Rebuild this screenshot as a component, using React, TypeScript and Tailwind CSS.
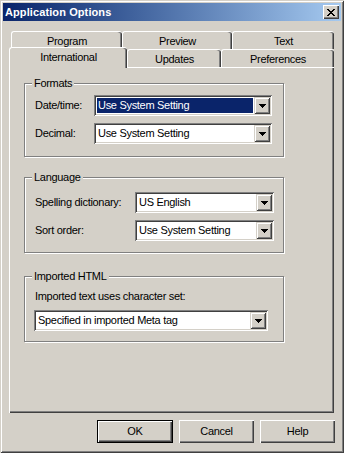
import React from 'react';

const raised =
  'shadow-[inset_1px_1px_#d4d0c8,inset_-1px_-1px_#404040,inset_2px_2px_#ffffff,inset_-2px_-2px_#808080]';
const button =
  'shadow-[inset_1px_1px_#ffffff,inset_-1px_-1px_#404040,inset_-2px_-2px_#808080]';
const sunken =
  'shadow-[inset_1px_1px_#808080,inset_-1px_-1px_#ffffff,inset_2px_2px_#404040,inset_-2px_-2px_#d4d0c8]';

function CloseGlyph() {
  const rows = ['##....##', '.##..##.', '..####..', '...##...', '..####..', '.##..##.', '##....##'];
  return (
    <svg width="8" height="7" viewBox="0 0 8 7" shapeRendering="crispEdges">
      {rows.map((r, y) =>
        r.split('').map((c, x) => (c === '#' ? <rect key={`${x}-${y}`} x={x} y={y} width="1" height="1" fill="#000" /> : null)),
      )}
    </svg>
  );
}

function Arrow() {
  return (
    <svg width="7" height="4" viewBox="0 0 7 4" shapeRendering="crispEdges">
      <path d="M0 0h7v1H0zM1 1h5v1H1zM2 2h3v1H2zM3 3h1v1H3z" fill="#000" />
    </svg>
  );
}

function Combo({ value, className, selected }: { value: string; className: string; selected?: boolean }) {
  return (
    <div className={`flex h-[21px] p-[2px] bg-white ${sunken} ${className}`}>
      <div className="flex-1 flex items-center pl-[1px] pr-[1px] py-[1px]">
        <div className={`flex-1 h-full flex items-center pl-[1px] ${selected ? 'bg-[#0a246a] text-white' : 'text-black'}`}>
          {value}
        </div>
      </div>
      <div className={`w-[16px] h-[17px] bg-[#d4d0c8] flex items-center justify-center ${raised}`}>
        <Arrow />
      </div>
    </div>
  );
}

function Group({ title, className, children }: { title: string; className: string; children: React.ReactNode }) {
  return (
    <div className={`relative w-[260px] border border-[#808080] shadow-[inset_1px_1px_#ffffff,1px_1px_#ffffff] ${className}`}>
      <span className="absolute -top-[7px] left-[7px] px-[2px] bg-[#d4d0c8] leading-[13px]">{title}</span>
      {children}
    </div>
  );
}

function Tab({ label, className }: { label: string; className: string }) {
  return (
    <div
      className={`flex items-center justify-center pt-[1px] border-l border-t border-white rounded-tl-[3px] rounded-tr-[3px] shadow-[inset_-1px_0_#404040,inset_-2px_0_#808080] ${className}`}
    >
      {label}
    </div>
  );
}

export default function App() {
  return (
    <div
      className={`w-[344px] h-[453px] bg-[#d4d0c8] p-[3px] flex flex-col text-[11px] tracking-[-0.3px] text-black font-['Liberation_Sans',Arial,sans-serif] ${raised}`}
    >
      {/* title bar */}
      <div className="h-[18px] flex items-center pl-[2px] pr-[2px] bg-linear-to-r from-[#0a246a] to-[#a6caf0]">
        <span className="flex-1 text-white font-bold text-[11px] tracking-[0.1px]">Application Options</span>
        <div className={`w-[16px] h-[14px] bg-[#d4d0c8] flex items-center justify-center ${button}`}>
          <CloseGlyph />
        </div>
      </div>

      {/* tabs */}
      <div className="mt-[10px] ml-[8px] flex h-[18px]">
        <Tab label="Program" className="w-[111px]" />
        <Tab label="Preview" className="w-[110px]" />
        <Tab label="Text" className="w-[102px]" />
      </div>
      <div className="ml-[8px] flex h-[18px]">
        <Tab label="International" className="relative z-10 -ml-[2px] -mt-[2px] w-[118px] h-[21px] bg-[#d4d0c8] pb-[2px]" />
        <Tab label="Updates" className="w-[94px]" />
        <Tab label="Preferences" className="w-[113px]" />
      </div>

      {/* panel */}
      <div
        className={`ml-[6px] w-[325px] h-[346px] pt-[16px] pl-[15px] flex flex-col shadow-[inset_1px_1px_#ffffff,inset_-1px_-1px_#404040,inset_-2px_-2px_#808080]`}
      >
        <Group title="Formats" className="h-[74px] pt-[11px] pl-[10px] flex flex-col gap-[7px]">
          <div className="flex items-center">
            <span className="w-[59px]">Date/time:</span>
            <Combo value="Use System Setting" className="w-[178px]" selected />
          </div>
          <div className="flex items-center">
            <span className="w-[59px]">Decimal:</span>
            <Combo value="Use System Setting" className="w-[178px]" />
          </div>
        </Group>

        <Group title="Language" className="mt-[20px] h-[76px] pt-[14px] pl-[10px] flex flex-col gap-[7px]">
          <div className="flex items-center">
            <span className="w-[100px]">Spelling dictionary:</span>
            <Combo value="US English" className="w-[139px]" />
          </div>
          <div className="flex items-center">
            <span className="w-[100px]">Sort order:</span>
            <Combo value="Use System Setting" className="w-[139px]" />
          </div>
        </Group>

        <Group title="Imported HTML" className="mt-[23px] h-[66px] pt-[13px] pl-[9px] flex flex-col">
          <span className="pl-[1px] leading-[13px]">Imported text uses character set:</span>
          <Combo value="Specified in imported Meta tag" className="mt-[7px] w-[234px]" />
        </Group>
      </div>

      {/* buttons */}
      <div className="mt-[7px] mr-[6px] flex justify-end gap-[6px]">
        <div className="w-[76px] h-[23px] border border-black">
          <div className={`w-full h-full flex items-center justify-center ${button}`}>OK</div>
        </div>
        <div className={`w-[75px] h-[23px] flex items-center justify-center ${button}`}>Cancel</div>
        <div className={`w-[75px] h-[23px] flex items-center justify-center ${button}`}>Help</div>
      </div>
    </div>
  );
}
